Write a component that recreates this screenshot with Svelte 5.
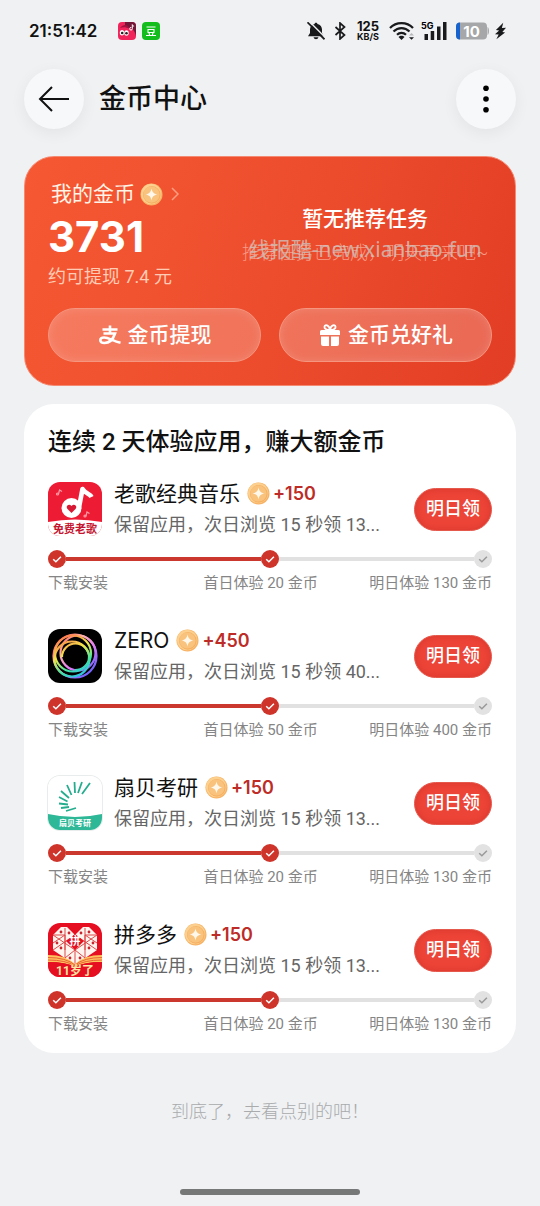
<script>
    const apps = [
        { id: "music", name: "老歌经典音乐", bonus: 150, first: 20, second: 130, desc: "保留应用，次日浏览 15 秒领 13..." },
        { id: "zero", name: "ZERO", bonus: 450, first: 50, second: 400, desc: "保留应用，次日浏览 15 秒领 40..." },
        { id: "shell", name: "扇贝考研", bonus: 150, first: 20, second: 130, desc: "保留应用，次日浏览 15 秒领 13..." },
        { id: "pdd", name: "拼多多", bonus: 150, first: 20, second: 130, desc: "保留应用，次日浏览 15 秒领 13..." },
    ];
</script>

{#snippet coin()}
    <svg class="coin" viewBox="0 0 24 24" aria-hidden="true">
        <circle cx="12" cy="12" r="11.5" fill="#f7b265" />
        <circle cx="11.6" cy="11.4" r="10.7" fill="#fcd08e" />
        <circle cx="12.4" cy="12.4" r="9.2" fill="#f5b063" />
        <circle cx="12" cy="12" r="8.4" fill="#f9c37d" />
        <path d="M12 5.8c.8 4 2.200 5.400 6.200 6.200-4 .8-5.400 2.200-6.200 6.200-.8-4-2.200-5.400-6.200-6.200 4-.8 5.400-2.200 6.200-6.200z" fill="#fff8ea" />
    </svg>
{/snippet}

{#snippet dot(done)}
    <svg class="dot" class:done viewBox="0 0 18 18" aria-hidden="true">
        <circle cx="9" cy="9" r="9" />
        <path d="M5.200 9.200l2.700 2.600 5-5" />
    </svg>
{/snippet}

<div class="page">
    <div class="status">
        <time>21:51:42</time>
        <svg class="notice first" viewBox="0 0 18 18" aria-hidden="true">
            <rect width="18" height="18" rx="4" fill="#f0245a" />
            <path d="M7 0h7a4 4 0 014 4v10c-1-5-3-8-11-9z" fill="#721637" />
            <path d="M2 6c3-4 8-4 10 1-3-2-7-2-10-1z" fill="#a30f3e" />
            <ellipse cx="4" cy="10.800" rx="2.200" ry="2.700" fill="#fff" />
            <ellipse cx="8.500" cy="11" rx="2.200" ry="2.700" fill="#fff" />
            <circle cx="4.200" cy="11" r="1.300" fill="#222" />
            <circle cx="8.500" cy="11.300" r="1.300" fill="#222" />
            <path d="M14.300 2.500v4.200a1.300 1.300 0 11-1-1.200M14.300 2.700c.3 1 1 1.400 1.800 1.500" fill="none" stroke="#fff" />
        </svg>
        <svg class="notice" viewBox="0 0 18 18" aria-hidden="true">
            <rect width="18" height="18" rx="4" fill="#12bd1c" />
            <path d="M4.500 5h9M6 7.500h6v3H6zM7 11l.8 2.500M11 11l-.8 2.500M4 13.500h10" fill="none" stroke="#fff" stroke-width="1.100" />
        </svg>

        <svg class="bell" viewBox="0 0 18 18" aria-hidden="true">
            <path d="M9 .8c.8 0 1.400.5 1.400 1.200C13.500 2.800 15 5 15 7.500V11l2 3.300H1L3 11V7.500C3 5 4.500 2.800 7.600 2 7.600 1.300 8.200.8 9 .8zM6.500 15.300h5a2.600 2.600 0 01-5 0z" fill="#191a1c" />
            <path d="M2-.8L19.500 16.700" stroke="#eff1f3" stroke-width="1.500" />
            <path d="M.5.3l17 17" stroke="#191a1c" stroke-width="1.700" />
        </svg>
        <svg class="bluetooth" viewBox="0 0 12 18" aria-hidden="true">
            <path d="M1.500 5l9 8L6 17V1l4.500 4-9 8" fill="none" stroke="#191a1c" stroke-width="1.700" />
        </svg>
        <span class="speed"><b>125</b><small>KB/S</small></span>
        <svg class="wifi" viewBox="0 0 26 18" aria-hidden="true">
            <g fill="none" stroke="#191a1c" stroke-width="2.200">
                <path d="M1 6C7-.5 18-.5 24 6" />
                <path d="M4.500 9.500c4.500-4.600 11.500-4.600 16 0" />
                <path d="M8 12.800c2.500-2.500 6.500-2.500 9 0" />
            </g>
            <path d="M12.500 18l-3-3c1.500-1.600 4.500-1.600 6 0z" fill="#191a1c" />
            <path d="M20 15.300h5l-2.500 2.400z" fill="#191a1c" />
            <path d="M20 13.500h5L22.500 11z" fill="#b5b7b9" />
        </svg>
        <svg class="signal" viewBox="0 0 27 18" aria-hidden="true">
            <path d="M3.500 12H7v6H3.500zM9.700 9h3.500v9H9.700zM16 4.500h3.500V18H16zM22 0h3.500v18H22z" fill="#191a1c" />
            <text x="0" y="7">5G</text>
        </svg>
        <svg class="battery" viewBox="0 0 34 18" aria-hidden="true">
            <rect y=".5" width="31" height="17" rx="4" fill="#a6a7a9" />
            <path d="M4 .5v17a4 4 0 01-4-4v-9a4 4 0 014-4z" fill="#1663cf" />
            <path d="M31.500 5c2 1 2 7 0 8z" fill="#a6a7a9" />
            <text x="15.500" y="14.500" text-anchor="middle">10</text>
        </svg>
        <svg class="bolt" viewBox="0 0 12 18" aria-hidden="true">
            <path d="M9 0L1 8l3.500.5L0 12.500l4 .3L1.500 18 11 10.500 8 10l4-4.500-4.500.3z" fill="#191a1c" />
        </svg>
    </div>

    <header>
        <button class="round" aria-label="返回">
            <svg viewBox="0 0 32 32" aria-hidden="true">
                <path d="M31 16H2M14 4L2 16l12 12" fill="none" stroke="#111" stroke-width="2" />
            </svg>
        </button>
        <h1>金币中心</h1>
        <button class="round" aria-label="更多">
            <svg viewBox="0 0 32 32" aria-hidden="true">
                <circle cx="16" cy="5.300" r="2.800" />
                <circle cx="16" cy="16" r="2.800" />
                <circle cx="16" cy="26.700" r="2.800" />
            </svg>
        </button>
    </header>

    <main>
        <section class="wallet">
            <div class="balance">
                <a href="#coins">
                    我的金币
                    {@render coin()}
                    <svg class="chevron" viewBox="0 0 8 14" aria-hidden="true">
                        <path d="M1 1l6 6-6 6" fill="none" stroke="#ff9d80" stroke-width="1.500" />
                    </svg>
                </a>
                <strong>3731</strong>
                <span class="cash">约可提现 7.4 元</span>
            </div>
            <div class="task">
                <h2>暂无推荐任务</h2>
                <p>推荐任务已完成，明天再来吧~</p>
                <span class="watermark">线报酷-new.xianbao.fun</span>
            </div>
            <div class="actions">
                <button>
                    <svg viewBox="0 0 24 24" aria-hidden="true">
                        <path d="M4.500 6.500h15M12 2.500V10M5.500 10.500H17c-2 6-6 9.500-10.500 9.500-5.500 0-5.500-5.500-.5-5.500 5 0 8.500 3.500 16.500 5.300" fill="none" stroke="#fff" stroke-width="2.600" />
                    </svg>
                    金币提现
                </button>
                <button>
                    <svg viewBox="0 0 24 24" aria-hidden="true">
                        <path d="M12 7C8 7 6 5.500 6.500 3.500S11 1.500 12 7c1-5.500 5-5.500 5.500-3.500S16 7 12 7z" fill="none" stroke="#fff" stroke-width="1.800" />
                        <path d="M3.500 7H11v5H2V8.500A1.500 1.500 0 013.500 7zM13 7h7.500A1.500 1.500 0 0122 8.500V12h-9zM3 13.500h8V23H5a2 2 0 01-2-2zM13 13.500h8V21a2 2 0 01-2 2h-6z" fill="#fff" />
                        <path d="M11 7h2v5h-2z" fill="#fff" />
                    </svg>
                    金币兑好礼
                </button>
            </div>
        </section>

        <section class="offers">
            <h2>连续 2 天体验应用，赚大额金币</h2>
            <ul>
                {#each apps as app}
                    <li>
                        <div class="app">
                            {#if app.id == "music"}
                                <svg class="logo" viewBox="0 0 54 54" aria-hidden="true">
                                    <rect width="54" height="54" fill="#ed1c34" />
                                    <path d="M0 40q27-5 54 0v14H0z" fill="#fff" />
                                    <path d="M30.500 28L34.500 7c3 5 7 4 9 8" fill="none" stroke="#fff" stroke-width="4.600" stroke-linejoin="round" />
                                    <circle cx="23.500" cy="26" r="10" fill="#fff" />
                                    <path d="M23.500 31l-4-4c-2.500-3 1.500-6 4-3 2.500-3 6.500 0 4 3z" fill="#d71933" />
                                    <g fill="none" stroke="#ff9aa5" stroke-width="1.200">
                                        <path d="M10.500 12l1-4 2.500 1.500M38 34l1-4 2.500 1.500" />
                                        <circle cx="9.500" cy="12" r="1" />
                                        <circle cx="37" cy="34" r="1" />
                                    </g>
                                    <text class="song" x="27" y="51" text-anchor="middle">免费老歌</text>
                                </svg>
                            {:else if app.id == "zero"}
                                <svg class="logo" viewBox="0 0 54 54" aria-hidden="true">
                                    <defs>
                                        <linearGradient id="ring-a" gradientUnits="userSpaceOnUse" x1="10" y1="8" x2="44" y2="46">
                                            <stop offset="0" stop-color="#ff5a4f" />
                                            <stop offset=".3" stop-color="#ffb2a8" />
                                            <stop offset=".6" stop-color="#e07cf5" />
                                            <stop offset="1" stop-color="#5a5dff" />
                                        </linearGradient>
                                        <linearGradient id="ring-b" gradientUnits="userSpaceOnUse" x1="12" y1="6" x2="34" y2="50">
                                            <stop offset="0" stop-color="#ff6a4d" />
                                            <stop offset=".4" stop-color="#f4e64a" />
                                            <stop offset=".7" stop-color="#42e3a0" />
                                            <stop offset="1" stop-color="#28b8ff" />
                                        </linearGradient>
                                    </defs>
                                    <rect width="54" height="54" fill="#000" />
                                    <g fill="none" stroke-width="2.200">
                                        <circle cx="27" cy="27" r="21.500" stroke="url(#ring-a)" />
                                        <circle cx="30" cy="24" r="17.500" stroke="url(#ring-a)" />
                                        <circle cx="24" cy="30" r="17.500" stroke="url(#ring-b)" />
                                        <circle cx="25" cy="24.500" r="18" stroke="url(#ring-b)" />
                                        <path d="M14 28a13.500 13.500 0 0127 0c0 8-7 13-14 13" stroke="url(#ring-b)" />
                                    </g>
                                </svg>
                            {:else if app.id == "shell"}
                                <svg class="logo framed" viewBox="0 0 54 54" aria-hidden="true">
                                    <rect width="54" height="54" fill="#fff" />
                                    <path d="M0 38q27 6 54 0v16H0z" fill="#2fb897" />
                                    <g stroke="#25ad8e" stroke-width="1.800">
                                        <path d="M42 7l-8 11M34 6l-4 11M26.500 6l.5 11M19 9l4.500 10M13 15l8 7M11 21l8.500 4.500M11 27.500l9 1M13 32l8-1M18 35l10-3" />
                                    </g>
                                    <text class="shell" x="27" y="50" text-anchor="middle">扇贝考研</text>
                                </svg>
                            {:else}
                                <svg class="logo" viewBox="0 0 54 54" aria-hidden="true">
                                    <rect width="54" height="54" fill="#e60f22" />
                                    <path d="M27 12l8-8h6l8 8v15L27 42 5 27V12l8-8h6z" fill="#fff4ee" />
                                    <path d="M5 12h12v15M49 12H37v15M5 27l22-15 22 15M5 12l22 15 22-15M17 5v30M37 5v30M27 27v15M5 20l12-8M49 20l-12-8M17 35l10-8 10 8" fill="none" stroke="#dc4a4c" />
                                    <g fill="#c9252f">
                                        <circle cx="13" cy="9" r="1.400" />
                                        <circle cx="41" cy="9" r="1.400" />
                                        <circle cx="21" cy="10" r="1.400" />
                                        <circle cx="33" cy="10" r="1.400" />
                                        <circle cx="9" cy="20" r="1.400" />
                                        <circle cx="13" cy="25" r="1.400" />
                                        <circle cx="41" cy="25" r="1.400" />
                                        <circle cx="45" cy="20" r="1.400" />
                                        <circle cx="22" cy="35" r="1.400" />
                                        <circle cx="32" cy="35" r="1.400" />
                                    </g>
                                    <path d="M27 11l9 7-9 9-9-9z" fill="#e60f22" />
                                    <text class="pin" x="27" y="22" text-anchor="middle">拼</text>
                                    <path d="M0 32q18 0 27 9 9-9 27-9v7q-18 0-27 5-9-5-27-5z" fill="#ffc35e" />
                                    <path d="M0 34.500q18 0 27 7.500 9-7.500 27-7.500M0 37q18 0 27 6 9-6 27-6" fill="none" stroke="#e4482c" stroke-width=".8" />
                                    <path d="M0 39q18 0 27 5 9-5 27-5v15H0z" fill="#e60f22" />
                                    <text class="age" x="27" y="52" text-anchor="middle">11岁了</text>
                                </svg>
                            {/if}
                            <div class="info">
                                <h3>{app.name} {@render coin()}<b>+{app.bonus}</b></h3>
                                <p>{app.desc}</p>
                            </div>
                            <button>明日领</button>
                        </div>
                        <div class="track">
                            {@render dot(true)}
                            <i class="done"></i>
                            {@render dot(true)}
                            <i></i>
                            {@render dot(false)}
                        </div>
                        <div class="labels">
                            <span>下载安装</span>
                            <span>首日体验 {app.first} 金币</span>
                            <span>明日体验 {app.second} 金币</span>
                        </div>
                    </li>
                {/each}
            </ul>
        </section>

        <p class="end">到底了，去看点别的吧！</p>
    </main>
    <div class="home"></div>
</div>

<style>
    :global(body) {
        margin: 0;
        background: #eff1f3;
    }

    .page {
        display: flex;
        flex-direction: column;
        box-sizing: border-box;
        min-height: 100vh;
        padding: 0 24px 11px;
        background: #eff1f3;
        color: #111;
        font-family: Roboto, "Noto Sans CJK SC", sans-serif;
    }

    h1, h2, h3, p, ul {
        margin: 0;
        padding: 0;
        font-weight: 400;
        list-style: none;
    }

    button {
        flex: none;
        padding: 0;
        border: 0;
        font: inherit;
        cursor: pointer;
    }

    svg {
        display: block;
        flex: none;
    }

    .status {
        display: flex;
        align-items: center;
        height: 62px;
        padding: 0 10px 0 5px;
        font-family: Inter, sans-serif;
    }

    .status time {
        font-size: 17px;
        font-weight: 600;
    }

    .notice {
        width: 18px;
        height: 18px;
        margin-left: 6px;
    }

    .notice.first {
        margin-left: auto;
    }

    .bell {
        width: 18px;
        height: 18px;
        margin-left: 147px;
    }

    .bluetooth {
        width: 12px;
        height: 18px;
        margin-left: 9px;
    }

    .speed {
        display: flex;
        flex-direction: column;
        align-items: center;
        margin: 0 10px 0 11px;
    }

    .speed b {
        font-size: 13px;
        line-height: 11px;
    }

    .speed small {
        font-size: 9px;
        font-weight: 700;
        line-height: 9px;
    }

    .wifi {
        width: 26px;
        height: 18px;
    }

    .signal {
        overflow: visible;
        width: 27px;
        height: 18px;
        margin-left: 6px;
    }

    .signal text {
        font-size: 9px;
        font-weight: 700;
    }

    .battery {
        width: 34px;
        height: 18px;
        margin-left: 8px;
    }

    .battery text {
        fill: #fff;
        font-size: 15px;
        font-weight: 700;
    }

    .bolt {
        width: 11px;
        height: 18px;
        margin-left: 5px;
    }

    header {
        display: flex;
        align-items: center;
        gap: 15px;
        margin: 7px 0 27px;
    }

    header h1 {
        flex: 1;
        font-size: 27px;
        font-weight: 500;
        line-height: 36px;
    }

    .round {
        display: grid;
        place-items: center;
        width: 60px;
        height: 60px;
        border-radius: 50%;
        background: #f7f8fa;
        box-shadow: 0 4px 16px rgba(0, 0, 0, 0.06);
    }

    .round svg {
        width: 32px;
        height: 32px;
    }

    .wallet {
        display: grid;
        grid-template-columns: 3fr 4fr;
        row-gap: 20px;
        padding: 23px;
        border: 1px solid #f58a72;
        border-radius: 30px;
        background: linear-gradient(110deg, #f65833, #ec4c2c 55%, #e23d25);
        color: #fff;
    }

    .balance {
        display: flex;
        flex-direction: column;
    }

    .balance a {
        display: flex;
        align-items: center;
        gap: 5px;
        padding-left: 3px;
        color: #fff4e6;
        font-size: 21px;
        line-height: 28px;
        text-decoration: none;
    }

    .coin {
        width: 23px;
        height: 23px;
    }

    .chevron {
        width: 8px;
        height: 14px;
        margin-left: 3px;
    }

    .balance strong {
        font-family: Inter, sans-serif;
        font-size: 42px;
        line-height: 58px;
    }

    .cash {
        color: #ffcbb4;
        font-size: 18px;
        line-height: 22px;
    }

    .task {
        position: relative;
        display: flex;
        flex-direction: column;
        justify-content: center;
        gap: 4px;
        padding-top: 4px;
        text-align: center;
        white-space: nowrap;
    }

    .task h2 {
        font-size: 21px;
        font-weight: 500;
        line-height: 30px;
    }

    .task p {
        color: #f79a85;
        font-size: 18px;
        font-weight: 300;
        line-height: 30px;
    }

    .watermark {
        position: absolute;
        right: 0;
        bottom: 25px;
        left: 0;
        color: rgba(205, 195, 190, 0.8);
        font-family: "Noto Sans", "Noto Sans CJK SC", sans-serif;
        font-size: 21px;
        line-height: 28px;
    }

    .actions {
        display: flex;
        grid-column: 1 / -1;
        gap: 18px;
    }

    .actions button {
        display: flex;
        flex: 1;
        align-items: center;
        justify-content: center;
        gap: 6px;
        height: 54px;
        border: 1px solid #f59680;
        border-radius: 27px;
        background: rgba(255, 255, 255, 0.22);
        box-shadow: inset 0 0 10px rgba(255, 255, 255, 0.15);
        color: #fff;
        font-size: 21px;
        font-weight: 500;
        line-height: 28px;
    }

    .actions svg {
        width: 24px;
        height: 24px;
    }

    .offers {
        margin-top: 18px;
        padding: 20px 24px 19px;
        border-radius: 30px;
        background: #fff;
    }

    .offers h2 {
        font-size: 24px;
        font-weight: 500;
        line-height: 36px;
    }

    .offers ul {
        display: flex;
        flex-direction: column;
        gap: 32px;
        margin-top: 18px;
    }

    .app {
        display: flex;
        align-items: center;
        gap: 12px;
    }

    .logo {
        width: 54px;
        height: 54px;
        border-radius: 12px;
    }

    .logo.framed {
        box-shadow: 0 0 0 1px #e9ecec;
    }

    .logo text {
        font-weight: 700;
    }

    .song {
        fill: #c51630;
        font-size: 11px;
    }

    .shell {
        fill: #fff;
        font-size: 8px;
    }

    .pin {
        fill: #fff;
        font-size: 11px;
    }

    .age {
        fill: #ffe6a5;
        font-size: 12px;
    }

    .info {
        flex: 1;
        min-width: 0;
        white-space: nowrap;
    }

    .info h3 {
        display: flex;
        align-items: center;
        gap: 7px;
        font-family: Inter, "Noto Sans CJK SC", sans-serif;
        font-size: 21px;
        line-height: 31px;
    }

    .info b {
        margin-left: -4px;
        color: #bd2c27;
        font-size: 18px;
        font-weight: 600;
    }

    .info p {
        overflow: hidden;
        color: #666;
        font-size: 18px;
        line-height: 31px;
    }

    .app button {
        width: 78px;
        height: 43px;
        border: 1px solid #e5584c;
        border-radius: 22px;
        background: #ec4437;
        box-shadow: inset 0 0 6px #d8352c;
        color: #fff;
        font-size: 18px;
        font-weight: 500;
        line-height: 24px;
    }

    .track {
        display: flex;
        align-items: center;
        margin-top: 10px;
    }

    .track i {
        flex: 1;
        height: 4px;
        background: #e1e1e1;
    }

    .track i.done {
        background: #cb382d;
    }

    .dot {
        width: 18px;
        height: 18px;
        fill: #e2e2e2;
    }

    .dot.done {
        fill: #cf342b;
    }

    .dot path {
        fill: none;
        stroke: #999;
        stroke-width: 1.5;
    }

    .dot.done path {
        stroke: #fff;
    }

    .labels {
        display: flex;
        justify-content: space-between;
        margin-top: 5px;
        color: #858585;
        font-size: 15px;
        line-height: 20px;
        white-space: nowrap;
    }

    .labels span:first-child {
        min-width: 104px;
    }

    .end {
        margin: 47px 0;
        color: #a9abad;
        font-size: 18px;
        font-weight: 300;
        line-height: 24px;
        text-align: center;
    }

    .home {
        width: 180px;
        height: 6px;
        margin: auto auto 0;
        border-radius: 3px;
        background: #767878;
    }
</style>
